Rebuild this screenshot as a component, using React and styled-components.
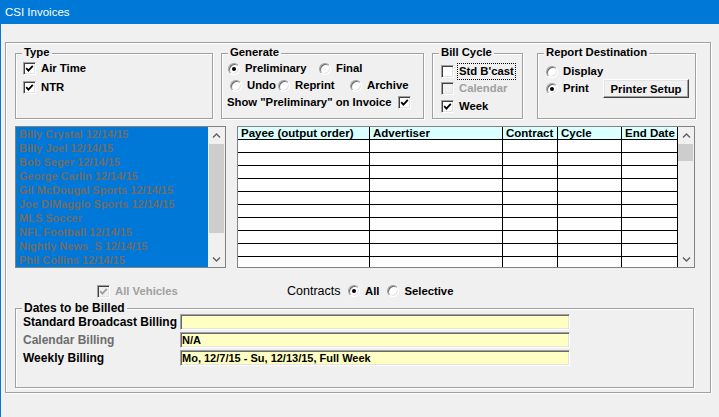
import React from "react";
import styled, { createGlobalStyle } from "styled-components";

const GlobalStyle = createGlobalStyle`
  html, body { margin: 0; padding: 0; background: #f0f0f0; }
  body { font-family: "Liberation Sans", Arial, sans-serif; }
  * { box-sizing: border-box; }
`;

const Window = styled.div`
  width: 719px;
  height: 417px;
  background: #f0f0f0;
  border-left: 1px solid #0078d7;
  overflow: hidden;
`;

const TitleBar = styled.div`
  height: 24px;
  background: #0078d7;
  color: #fff;
  font-size: 11.5px;
  display: flex;
  align-items: center;
  padding-left: 4px;
`;

const Content = styled.div`
  padding: 18px 0 0 4px;
`;

const Frame = styled.div`
  width: 706px;
  border: 1px solid #a0a0a0;
  box-shadow: inset 1px 1px 0 #fff, 1px 1px 0 #fff;
  padding: 10px 9px 4px;
`;

const TopRow = styled.div`
  display: flex;
  align-items: flex-start;
`;

const Group = styled.div`
  position: relative;
  flex: none;
  width: ${(p) => p.$w}px;
  height: ${(p) => p.$h}px;
  margin-left: ${(p) => p.$ml || 0}px;
  margin-top: ${(p) => p.$mt || 0}px;
  padding: ${(p) => p.$pad};
  border: 1px solid #a0a0a0;
  box-shadow: inset 1px 1px 0 #fff, 1px 1px 0 #fff;
`;

const Legend = styled.span`
  position: absolute;
  top: -8px;
  left: 6px;
  padding: 0 2px;
  background: #f0f0f0;
  font-weight: bold;
  font-size: ${(p) => p.$size || 11.3}px;
  line-height: ${(p) => (p.$size ? 14 : 13)}px;
  color: #000;
  white-space: nowrap;
`;

const Row = styled.div`
  display: flex;
  align-items: center;
  height: ${(p) => p.$h}px;
  margin-left: ${(p) => p.$ml || 0}px;
`;

const Item = styled.div`
  display: flex;
  align-items: center;
  flex: none;
  width: ${(p) => (p.$w ? `${p.$w}px` : "auto")};
  margin-left: ${(p) => p.$ml || 0}px;
`;

const Box = styled.span`
  width: 13px;
  height: 13px;
  flex: none;
  border: 1px solid;
  border-color: #a0a0a0 #fff #fff #a0a0a0;
  box-shadow: inset 1px 1px 0 #404040, inset -1px -1px 0 #e3e3e3;
  background: ${(p) => (p.$disabled ? "#f0f0f0" : "#fff")};
  display: flex;
  align-items: center;
  justify-content: center;
`;

const Circle = styled.span`
  width: 12px;
  height: 12px;
  flex: none;
  border-radius: 50%;
  border: 1px solid;
  border-color: #a0a0a0 #fff #fff #a0a0a0;
  box-shadow: inset 1px 1px 0 #696969, inset -1px -1px 0 #e3e3e3;
  background: #fff;
  display: flex;
  align-items: center;
  justify-content: center;
  &::after {
    content: "";
    display: ${(p) => (p.$on ? "block" : "none")};
    width: 4px;
    height: 4px;
    border-radius: 50%;
    background: #000;
  }
`;

const Text = styled.span`
  font-weight: ${(p) => (p.$regular ? "normal" : "bold")};
  font-size: ${(p) => p.$size || 11.3}px;
  line-height: 13px;
  color: ${(p) => (p.$disabled ? "#a0a0a0" : "#000")};
  margin-left: ${(p) => p.$gap ?? 5}px;
  white-space: nowrap;
  flex: none;
  width: ${(p) => (p.$w ? `${p.$w}px` : "auto")};
  border: ${(p) => (p.$focus ? "1px dotted #000" : "none")};
  padding: ${(p) => (p.$focus ? "1px 1px" : "0")};
`;

const Check = ({ checked, disabled }) => (
  <Box $disabled={disabled}>
    {checked && (
      <svg width="9" height="9" viewBox="0 0 9 9">
        <path
          d="M1.2 4.2 L3.4 6.6 L7.8 1.8"
          fill="none"
          stroke={disabled ? "#a0a0a0" : "#000"}
          strokeWidth="1.8"
        />
      </svg>
    )}
  </Box>
);

const CheckItem = ({ label, checked, disabled, focus, w }) => (
  <Item $w={w}>
    <Check checked={checked} disabled={disabled} />
    <Text $disabled={disabled} $focus={focus} $gap={focus ? 3 : 5}>
      {label}
    </Text>
  </Item>
);

const RadioItem = ({ label, on, w, ml }) => (
  <Item $w={w} $ml={ml}>
    <Circle $on={on} />
    <Text>{label}</Text>
  </Item>
);

const Button = styled.button`
  width: 86px;
  height: 19px;
  padding: 0;
  font-family: "Liberation Sans", Arial, sans-serif;
  font-weight: bold;
  font-size: 11.3px;
  color: #000;
  background: #f0f0f0;
  border: 1px solid;
  border-color: #fff #404040 #404040 #fff;
  box-shadow: inset -1px -1px 0 #a0a0a0, inset 1px 1px 0 #e3e3e3;
  flex: none;
`;

const ListRow = styled.div`
  display: flex;
  margin-top: 7px;
  height: 142px;
`;

const ListBox = styled.div`
  width: 211px;
  height: 142px;
  border: 1px solid #828282;
  display: flex;
  background: #fff;
  flex: none;
`;

const ListItems = styled.div`
  flex: 1;
  background: #0078d7;
  padding-left: 3px;
  overflow: hidden;
`;

const ListItem = styled.div`
  height: 14px;
  line-height: 14px;
  font-weight: bold;
  font-size: 11px;
  color: #6d6d6d;
  white-space: nowrap;
`;

const ScrollBar = styled.div`
  width: ${(p) => p.$w}px;
  flex: none;
  background: #f0f0f0;
  display: flex;
  flex-direction: column;
  align-items: center;
`;

const ScrollBtn = styled.div`
  height: 17px;
  width: 100%;
  flex: none;
  display: flex;
  align-items: center;
  justify-content: center;
`;

const Track = styled.div`
  flex: 1;
  width: 100%;
  display: flex;
  flex-direction: column;
  align-items: ${(p) => p.$align || "center"};
`;

const Thumb = styled.div`
  width: 15px;
  height: ${(p) => p.$h}px;
  background: #cdcdcd;
`;

const Chevron = ({ down }) => (
  <svg width="9" height="6" viewBox="0 0 9 6">
    <path
      d={down ? "M1 1.5 L4.5 5 L8 1.5" : "M1 4.5 L4.5 1 L8 4.5"}
      fill="none"
      stroke="#606060"
      strokeWidth="1.4"
    />
  </svg>
);

const Scroller = ({ w, thumb, align }) => (
  <ScrollBar $w={w}>
    <ScrollBtn>
      <Chevron />
    </ScrollBtn>
    <Track $align={align}>
      <Thumb $h={thumb} />
    </Track>
    <ScrollBtn>
      <Chevron down />
    </ScrollBtn>
  </ScrollBar>
);

const GridBox = styled.div`
  margin-left: 11px;
  width: 458px;
  height: 142px;
  border: 1px solid #828282;
  display: flex;
  background: #fff;
  flex: none;
`;

const Table = styled.div`
  width: 440px;
  overflow: hidden;
  display: grid;
  grid-template-columns: 132px 133px 55px 64px 56px;
  grid-auto-rows: 13px;
  align-content: start;
`;

const Cell = styled.div`
  border-right: 1px solid #000;
  border-bottom: 1px solid #000;
  background: ${(p) => (p.$head ? "#dcffff" : "#fff")};
  font-weight: bold;
  font-size: 11.5px;
  line-height: 12px;
  padding-left: 3px;
  white-space: nowrap;
  overflow: hidden;
`;

const OptRow = styled.div`
  display: flex;
  align-items: center;
  height: 18px;
  margin-top: 14px;
  padding-left: 82px;
`;

const DatesGrid = styled.div`
  display: grid;
  grid-template-columns: 157px 390px;
  grid-auto-rows: 16px;
  row-gap: 2px;
  align-items: center;
`;

const DateLabel = styled.span`
  font-size: 12px;
  font-weight: bold;
  line-height: 14px;
  color: ${(p) => (p.$disabled ? "#6d6d6d" : "#000")};
  white-space: nowrap;
`;

const Field = styled.div`
  height: 16px;
  border: 1px solid;
  border-color: #a0a0a0 #fff #fff #a0a0a0;
  box-shadow: inset 1px 1px 0 #696969, inset -1px -1px 0 #e3e3e3;
  background: #ffffc4;
  font-size: 11px;
  font-weight: bold;
  line-height: 14px;
  padding-left: 1px;
  white-space: nowrap;
`;

const vehicles = [
  "Billy Crystal 12/14/15",
  "Billy Joel 12/14/15",
  "Bob Seger 12/14/15",
  "George Carlin 12/14/15",
  "Gil McDougal Sports 12/14/15",
  "Joe DiMaggio Sports 12/14/15",
  "MLS Soccer",
  "NFL Football 12/14/15",
  "Nightly News_S 12/14/15",
  "Phil Collins 12/14/15",
];

const headers = ["Payee (output order)", "Advertiser", "Contract", "Cycle", "End Date"];

export default function App() {
  return (
    <>
      <GlobalStyle />
      <Window>
        <TitleBar>CSI Invoices</TitleBar>
        <Content>
          <Frame>
            <TopRow>
              <Group $w={198} $h={66} $pad="5px 0 0 7px">
                <Legend>Type</Legend>
                <Row $h={19}>
                  <CheckItem label="Air Time" checked />
                </Row>
                <Row $h={19}>
                  <CheckItem label="NTR" checked />
                </Row>
              </Group>

              <Group $w={203} $h={66} $ml={8} $pad="6px 0 0 6px">
                <Legend>Generate</Legend>
                <Row $h={17}>
                  <RadioItem label="Preliminary" on w={91} />
                  <RadioItem label="Final" />
                </Row>
                <Row $h={17} $ml={2}>
                  <RadioItem label="Undo" w={48} />
                  <RadioItem label="Reprint" w={72} />
                  <RadioItem label="Archive" />
                </Row>
                <Row $h={17} $ml={-1}>
                  <Text $gap={0} $w={171}>Show "Preliminary" on Invoice</Text>
                  <Check checked />
                </Row>
              </Group>

              <Group $w={91} $h={66} $ml={8} $pad="8px 0 0 8px">
                <Legend>Bill Cycle</Legend>
                <Row $h={18}>
                  <CheckItem label="Std B'cast" focus />
                </Row>
                <Row $h={17}>
                  <CheckItem label="Calendar" disabled />
                </Row>
                <Row $h={19}>
                  <CheckItem label="Week" checked />
                </Row>
              </Group>

              <Group $w={159} $h={66} $ml={14} $pad="9px 0 0 8px">
                <Legend>Report Destination</Legend>
                <Row $h={17}>
                  <RadioItem label="Display" />
                </Row>
                <Row $h={17}>
                  <RadioItem label="Print" on w={57} />
                  <Button>Printer Setup</Button>
                </Row>
              </Group>
            </TopRow>

            <ListRow>
              <ListBox>
                <ListItems>
                  {vehicles.map((v) => (
                    <ListItem key={v}>{v}</ListItem>
                  ))}
                </ListItems>
                <Scroller w={17} thumb={89} />
              </ListBox>
              <GridBox>
                <Table>
                  {headers.map((h) => (
                    <Cell key={h} $head>
                      {h}
                    </Cell>
                  ))}
                  {Array.from({ length: 50 }).map((_, i) => (
                    <Cell key={i} />
                  ))}
                </Table>
                <Scroller w={16} thumb={17} align="flex-start" />
              </GridBox>
            </ListRow>

            <OptRow>
              <CheckItem label="All Vehicles" checked disabled w={190} />
              <Text $regular $size={12.5} $gap={0} $w={61}>
                Contracts
              </Text>
              <RadioItem label="All" on />
              <RadioItem label="Selective" ml={8} />
            </OptRow>

            <Group $w={679} $h={80} $mt={8} $pad="5px 0 0 7px">
              <Legend $size={12}>Dates to be Billed</Legend>
              <DatesGrid>
                <DateLabel>Standard Broadcast Billing</DateLabel>
                <Field />
                <DateLabel $disabled>Calendar Billing</DateLabel>
                <Field>N/A</Field>
                <DateLabel>Weekly Billing</DateLabel>
                <Field>Mo, 12/7/15 - Su, 12/13/15, Full Week</Field>
              </DatesGrid>
            </Group>
          </Frame>
        </Content>
      </Window>
    </>
  );
}
